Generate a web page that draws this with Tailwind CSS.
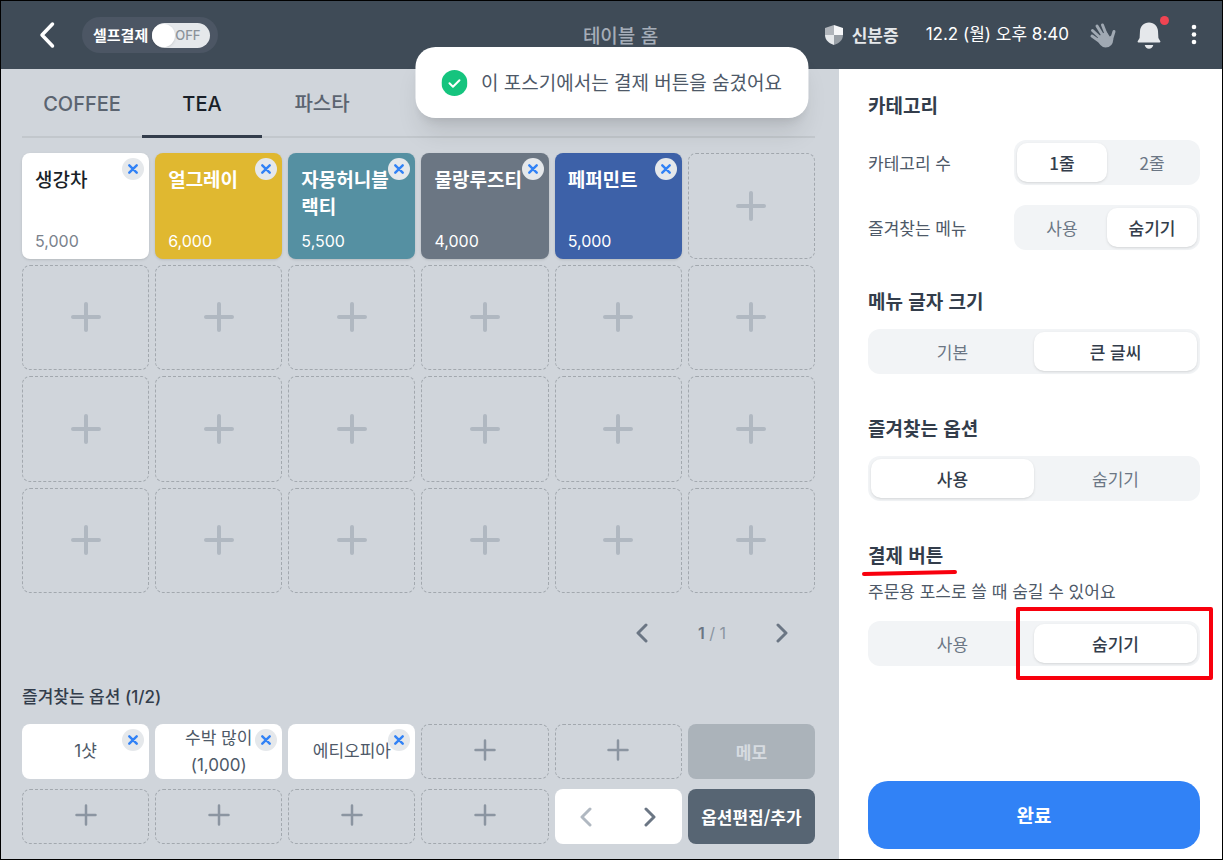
<!DOCTYPE html>
<html lang="ko">
<head>
    <meta charset="UTF-8">
    <meta name="viewport" content="width=device-width, initial-scale=1.0">
    <title>테이블 홈</title>
    <script src="https://cdn.jsdelivr.net/npm/@tailwindcss/browser@4"></script>
</head>
<body class="relative flex min-h-screen flex-col border border-black bg-[#d0d5db] font-['Noto_Sans_CJK_KR',sans-serif] text-[#333d4b]">

    <header class="grid h-[68px] grid-cols-[1fr_auto_1fr] items-center bg-[#3f4b57] pr-5 pl-[38px] text-white">
        <div class="flex items-center gap-[27px]">
            <button aria-label="뒤로">
                <svg class="h-7 w-4" viewBox="0 0 16 28" fill="none" stroke="currentColor" stroke-width="3.500" stroke-linecap="round" stroke-linejoin="round"><path d="M13.500 3 3 14l10.500 11"/></svg>
            </button>
            <label class="flex h-9 items-center gap-1 rounded-full bg-[#4c5664] pr-2 pl-[11px] text-[15px] leading-6 font-bold">
                셀프결제
                <input type="checkbox" class="sr-only">
                <span class="flex h-[25px] w-[58px] items-center rounded-full bg-[#e5e8eb] font-['Inter',sans-serif] text-[13px] font-medium text-[#8b9299]">
                    <span class="size-[23px] rounded-full bg-white shadow"></span>OFF
                </span>
            </label>
        </div>
        <h1 class="text-[19px] leading-7 font-medium text-[#a5adb8]">테이블 홈</h1>
        <div class="flex items-center justify-end">
            <button class="flex items-center gap-2 text-[17px] leading-6 font-bold text-[#e5e8eb]">
                <svg class="h-[22px] w-5" viewBox="0 0 20 22">
                    <path d="M10 1 1 4v7h9z" fill="#b0b5bb"/>
                    <path d="m10 1 9 3v7h-9z" fill="#f5f6f8"/>
                    <path d="M1 11c0 5 4 8.500 9 10V11z" fill="#e5e8eb"/>
                    <path d="M19 11c0 5-4 8.500-9 10V11z" fill="#989fa6"/>
                </svg>
                신분증
            </button>
            <time class="ml-[27px] font-['Inter','Noto_Sans_CJK_KR',sans-serif] text-[17px] whitespace-nowrap">12.2 (월) 오후 8:40</time>
            <button class="ml-5" aria-label="호출">
                <svg class="size-7" viewBox="0 0 28 28" fill="none" stroke="#a0a9b3" stroke-width="3" stroke-linecap="round" stroke-linejoin="round">
                    <path d="m10 20-7-5M11 16.500 3.500 9.500M13.500 14 8 5M17 13l-3.500-9M22.500 18.500 25 10.500"/>
                    <path d="m9 18 4-4 4-2.500 3.500 5.500 2-1.500.8 3c-.3 4.500-3 7-6.800 7-3.500 0-6-3.500-7.500-7.500z" fill="#a0a9b3" stroke-width="2"/>
                </svg>
            </button>
            <button class="relative ml-5" aria-label="알림">
                <svg class="h-7 w-6" viewBox="0 0 24 28" fill="#e5e8eb"><path d="M12 1.500c-5.300 0-8.700 3.700-9 8.500l-.4 7L.7 20.200c-.3.600 0 1.200.7 1.200h21.200c.7 0 1-.6.700-1.200L21.400 17l-.4-7c-.3-4.800-3.700-8.500-9-8.500zM7.700 24h8.600c-.5 2.300-2.200 3.800-4.300 3.800s-3.800-1.500-4.300-3.800z"/></svg>
                <span class="absolute -top-[5px] -right-2 size-[9px] rounded-full bg-[#f04452]"></span>
            </button>
            <button class="ml-[25px]" aria-label="더보기">
                <svg class="h-6 w-4" viewBox="0 0 16 24" fill="currentColor"><circle cx="8" cy="4" r="2.300"/><circle cx="8" cy="11.500" r="2.300"/><circle cx="8" cy="19" r="2.300"/></svg>
            </button>
        </div>
    </header>

    <div class="flex flex-1">
        <main class="flex flex-1 flex-col pr-6 pb-[15px] pl-[21px]">
            <nav class="flex h-[69px] border-b-2 border-[#c2c7cc] font-['Inter','Noto_Sans_CJK_KR',sans-serif] text-xl font-medium text-[#5b6470]">
                <button class="w-[120px] pt-[3px]">COFFEE</button>
                <button class="-mb-0.5 w-[120px] border-b-[3px] border-[#333d4b] pt-1 text-[#191f28]">TEA</button>
                <button class="w-[120px] pt-[3px]">파스타</button>
            </nav>

            <div id="menuGrid" class="mt-[15px] grid flex-1 grid-cols-6 grid-rows-4 gap-[6px]"></div>

            <div class="mt-5 flex h-10 items-center justify-end gap-12 pr-[25px] text-[#6b7684]">
                <button aria-label="이전 페이지">
                    <svg class="h-5 w-4" viewBox="0 0 16 20" fill="none" stroke="currentColor" stroke-width="3" stroke-linecap="round" stroke-linejoin="round"><path d="m12 2-8 8 8 8"/></svg>
                </button>
                <p class="font-['Inter',sans-serif] text-base whitespace-nowrap text-[#8b95a1]"><b class="font-semibold text-[#6b7684]">1</b> / 1</p>
                <button aria-label="다음 페이지">
                    <svg class="h-5 w-4" viewBox="0 0 16 20" fill="none" stroke="currentColor" stroke-width="3" stroke-linecap="round" stroke-linejoin="round"><path d="m4 2 8 8-8 8"/></svg>
                </button>
            </div>

            <h2 class="mt-8 font-['Inter','Noto_Sans_CJK_KR',sans-serif] text-[17px] leading-6 font-medium">즐겨찾는 옵션 (1/2)</h2>
            <div id="optionGrid" class="mt-[15px] grid grid-cols-6 gap-x-[6px] gap-y-[10px]"></div>
        </main>

        <aside class="flex w-[383px] flex-col bg-white pt-[22px] pr-[22px] pb-[10px] pl-[29px] text-[17px]">
            <h2 class="text-[19px] leading-7 font-bold">카테고리</h2>
            <div class="mt-[21px] flex items-center justify-between">
                <span id="rowsLabel" class="text-[#4e5968]">카테고리 수</span>
                <div role="radiogroup" aria-labelledby="rowsLabel" class="flex h-[45px] w-[186px] rounded-xl bg-[#f2f4f6] p-[3px]">
                    <label class="flex flex-1 items-center justify-center rounded-[10px] text-[#6b7684] has-checked:bg-white has-checked:font-medium has-checked:text-[#333d4b] has-checked:shadow-sm"><input type="radio" name="rows" class="sr-only" checked>1줄</label>
                    <label class="flex flex-1 items-center justify-center rounded-[10px] text-[#6b7684] has-checked:bg-white has-checked:font-medium has-checked:text-[#333d4b] has-checked:shadow-sm"><input type="radio" name="rows" class="sr-only">2줄</label>
                </div>
            </div>
            <div class="mt-5 flex items-center justify-between">
                <span id="favMenuLabel" class="text-[#4e5968]">즐겨찾는 메뉴</span>
                <div role="radiogroup" aria-labelledby="favMenuLabel" class="flex h-[45px] w-[186px] rounded-xl bg-[#f2f4f6] p-[3px]">
                    <label class="flex flex-1 items-center justify-center rounded-[10px] text-[#6b7684] has-checked:bg-white has-checked:font-medium has-checked:text-[#333d4b] has-checked:shadow-sm"><input type="radio" name="favMenu" class="sr-only">사용</label>
                    <label class="flex flex-1 items-center justify-center rounded-[10px] text-[#6b7684] has-checked:bg-white has-checked:font-medium has-checked:text-[#333d4b] has-checked:shadow-sm"><input type="radio" name="favMenu" class="sr-only" checked>숨기기</label>
                </div>
            </div>

            <h2 id="fontSizeLabel" class="mt-[37px] text-[19px] leading-7 font-bold">메뉴 글자 크기</h2>
            <div role="radiogroup" aria-labelledby="fontSizeLabel" class="mt-[14px] flex h-[45px] rounded-xl bg-[#f2f4f6] p-[3px]">
                <label class="flex flex-1 items-center justify-center rounded-[10px] text-[#6b7684] has-checked:bg-white has-checked:font-medium has-checked:text-[#333d4b] has-checked:shadow-sm"><input type="radio" name="fontSize" class="sr-only">기본</label>
                <label class="flex flex-1 items-center justify-center rounded-[10px] text-[#6b7684] has-checked:bg-white has-checked:font-medium has-checked:text-[#333d4b] has-checked:shadow-sm"><input type="radio" name="fontSize" class="sr-only" checked>큰 글씨</label>
            </div>

            <h2 id="favOptionLabel" class="mt-10 text-[19px] leading-7 font-bold">즐겨찾는 옵션</h2>
            <div role="radiogroup" aria-labelledby="favOptionLabel" class="mt-[14px] flex h-[45px] rounded-xl bg-[#f2f4f6] p-[3px]">
                <label class="flex flex-1 items-center justify-center rounded-[10px] text-[#6b7684] has-checked:bg-white has-checked:font-medium has-checked:text-[#333d4b] has-checked:shadow-sm"><input type="radio" name="favOption" class="sr-only" checked>사용</label>
                <label class="flex flex-1 items-center justify-center rounded-[10px] text-[#6b7684] has-checked:bg-white has-checked:font-medium has-checked:text-[#333d4b] has-checked:shadow-sm"><input type="radio" name="favOption" class="sr-only">숨기기</label>
            </div>

            <div class="relative mt-10">
                <h2 id="payLabel" class="text-[19px] leading-7 font-bold">결제 버튼</h2>
                <svg class="absolute top-7 -left-2 h-2 w-[100px]" viewBox="0 0 100 8" stroke="#f8000d" stroke-width="4" stroke-linecap="round"><path d="M4 5 95 3"/></svg>
            </div>
            <p class="mt-[10px] leading-6 text-[#4e5968]">주문용 포스로 쓸 때 숨길 수 있어요</p>
            <div class="relative mt-[18px]">
                <div role="radiogroup" aria-labelledby="payLabel" class="flex h-[45px] rounded-xl bg-[#f2f4f6] p-[3px]">
                    <label class="flex flex-1 items-center justify-center rounded-[10px] text-[#6b7684] has-checked:bg-white has-checked:font-medium has-checked:text-[#333d4b] has-checked:shadow-sm"><input type="radio" name="payButton" class="sr-only">사용</label>
                    <label class="flex flex-1 items-center justify-center rounded-[10px] text-[#6b7684] has-checked:bg-white has-checked:font-medium has-checked:text-[#333d4b] has-checked:shadow-sm"><input type="radio" name="payButton" class="sr-only" checked>숨기기</label>
                </div>
                <div class="pointer-events-none absolute -top-[14px] -right-[13px] -bottom-[14px] left-[148px] rounded-xs border-4 border-[#f8000d]"></div>
            </div>

            <button class="mt-auto h-[68px] rounded-[20px] bg-[#3182f6] text-[19px] leading-7 font-bold text-white">완료</button>
        </aside>
    </div>

    <div role="status" class="absolute top-[46px] left-1/2 flex h-[71px] -translate-x-1/2 items-center gap-[14px] rounded-[20px] bg-white px-[26px] shadow-xl">
        <svg class="size-[26px]" viewBox="0 0 26 26" fill="none"><circle cx="13" cy="13" r="13" fill="#15c47e"/><path d="m8 13.300 3.500 3.400 6.500-6.500" stroke="#fff" stroke-width="2" stroke-linecap="round" stroke-linejoin="round"/></svg>
        <p class="pt-[2px] font-['Inter','Noto_Sans_CJK_KR',sans-serif] text-[19px] leading-7 whitespace-nowrap text-[#4e5968]">이 포스기에서는 결제 버튼을 숨겼어요</p>
    </div>

    <script>
        const menus = [
            { name: "생강차", price: "5,000", color: "bg-white text-[#191f28] font-medium", priceColor: "text-[#7a828c]" },
            { name: "얼그레이", price: "6,000", color: "bg-[#e0b830] text-white font-bold", priceColor: "" },
            { name: "자몽허니블랙티", price: "5,500", color: "bg-[#5590a2] text-white font-bold", priceColor: "" },
            { name: "물랑루즈티", price: "4,000", color: "bg-[#6b7683] text-white font-bold", priceColor: "" },
            { name: "페퍼민트", price: "5,000", color: "bg-[#3d61a8] text-white font-bold", priceColor: "" },
        ];
        const options = ["1샷", "수박 많이<br>(1,000)", "에티오피아"];

        const removeButton = `
            <button aria-label="삭제" class="absolute top-[5px] right-[5px] flex size-[22px] items-center justify-center rounded-full bg-[#e5e8eb]">
                <svg class="size-[10px]" viewBox="0 0 10 10" stroke="#3182f6" stroke-width="2.400" stroke-linecap="round"><path d="m1.300 1.300 7.400 7.400M8.700 1.300 1.300 8.700"/></svg>
            </button>`;

        const emptyMenu = `
            <button aria-label="메뉴 추가" class="flex items-center justify-center rounded-lg border border-dashed border-[#a2a8ae]">
                <svg class="size-[30px]" viewBox="0 0 30 30" stroke="#b0b8c1" stroke-width="4" stroke-linecap="round"><path d="M15 2v26M2 15h26"/></svg>
            </button>`;

        const emptyOption = `
            <button aria-label="옵션 추가" class="flex h-[55px] items-center justify-center rounded-lg border border-dashed border-[#a2a8ae] pb-1">
                <svg class="size-[22px]" viewBox="0 0 22 22" stroke="#8b95a1" stroke-width="2.500" stroke-linecap="round"><path d="M11 1.500v19M1.500 11h19"/></svg>
            </button>`;

        document.getElementById("menuGrid").innerHTML = menus.map(menu => `
            <div class="relative flex flex-col justify-between rounded-lg pt-3 pr-3 pb-2 pl-[13px] shadow ${menu.color}">
                <p class="text-[19px] leading-[27px] break-all">${menu.name}</p>
                <p class="font-['Inter',sans-serif] text-base leading-5 font-normal ${menu.priceColor}">${menu.price}</p>
                ${removeButton}
            </div>`).join("") + emptyMenu.repeat(19);

        document.getElementById("optionGrid").innerHTML = options.map(option => `
            <div class="relative flex h-[55px] items-center justify-center rounded-lg bg-white text-center font-['Inter','Noto_Sans_CJK_KR',sans-serif] text-[17px] leading-[27px] text-[#4e5968]">
                <p>${option}</p>
                ${removeButton}
            </div>`).join("") + emptyOption.repeat(2) + `
            <button class="rounded-lg bg-[#abb3ba] text-[17px] leading-6 font-bold text-[#d6dbe0]" disabled>메모</button>`
            + emptyOption.repeat(4) + `
            <div class="flex items-center justify-around rounded-lg bg-white text-[#6b7684]">
                <button aria-label="이전 옵션" class="text-[#b0b8c1]" disabled>
                    <svg class="h-5 w-4" viewBox="0 0 16 20" fill="none" stroke="currentColor" stroke-width="3" stroke-linecap="round" stroke-linejoin="round"><path d="m12 2-8 8 8 8"/></svg>
                </button>
                <button aria-label="다음 옵션">
                    <svg class="h-5 w-4" viewBox="0 0 16 20" fill="none" stroke="currentColor" stroke-width="3" stroke-linecap="round" stroke-linejoin="round"><path d="m4 2 8 8-8 8"/></svg>
                </button>
            </div>
            <button class="rounded-lg bg-[#576573] text-[17px] leading-6 font-bold text-white">옵션편집/추가</button>`;
    </script>
</body>
</html>
